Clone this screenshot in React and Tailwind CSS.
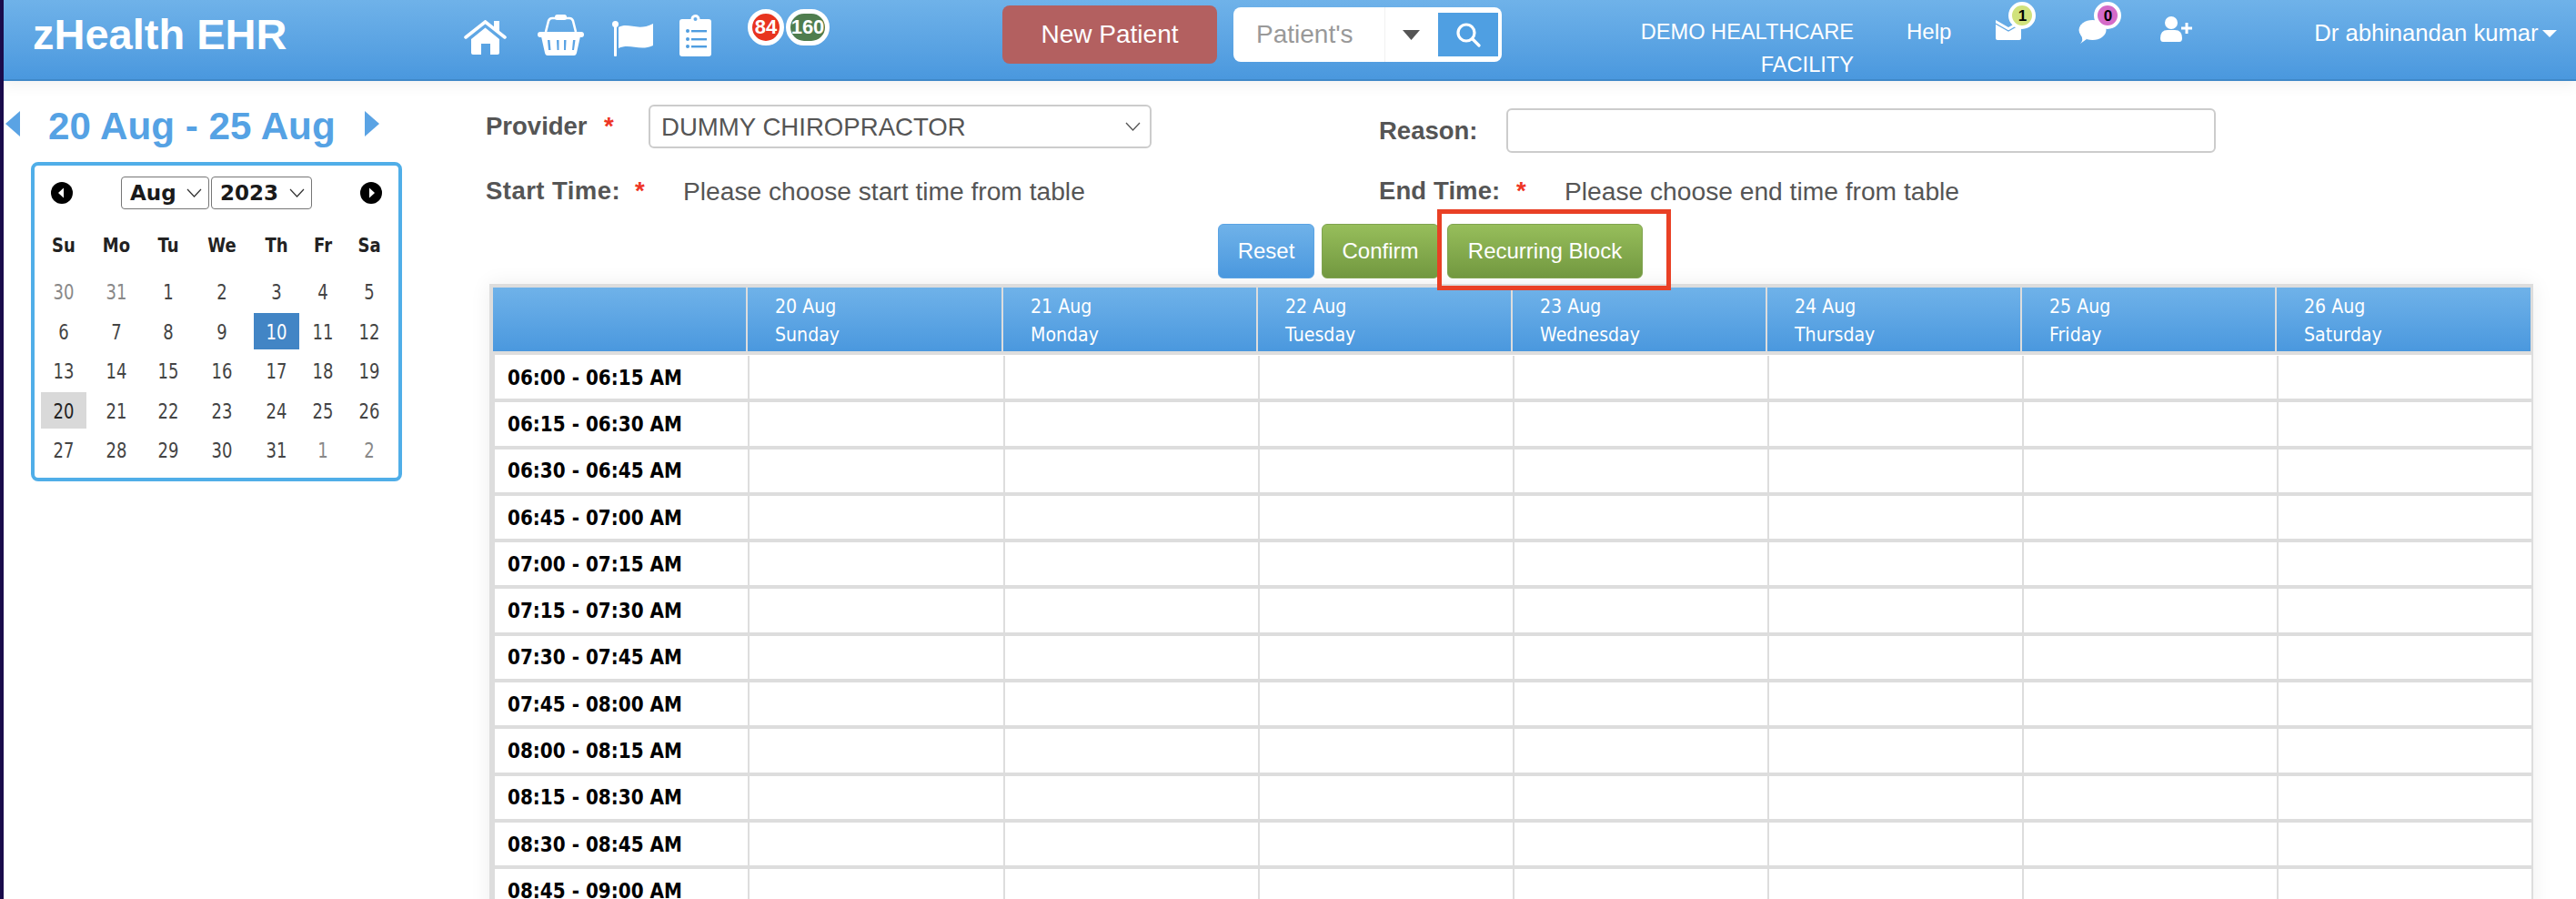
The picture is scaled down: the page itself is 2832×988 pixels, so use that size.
import React from 'react';

const SANS = { fontFamily: '"Liberation Sans", Arial, sans-serif' };
const DEJAVU = { fontFamily: '"DejaVu Sans", sans-serif' };
const BLUE = '#5aa3e4';

const DAYS = ['Su', 'Mo', 'Tu', 'We', 'Th', 'Fr', 'Sa'];
const WEEKS = [
  [[30, 1], [31, 1], 1, 2, 3, 4, 5],
  [6, 7, 8, 9, 10, 11, 12],
  [13, 14, 15, 16, 17, 18, 19],
  [20, 21, 22, 23, 24, 25, 26],
  [27, 28, 29, 30, 31, [1, 1], [2, 1]],
];
const COLS = [
  ['20 Aug', 'Sunday'], ['21 Aug', 'Monday'], ['22 Aug', 'Tuesday'], ['23 Aug', 'Wednesday'],
  ['24 Aug', 'Thursday'], ['25 Aug', 'Friday'], ['26 Aug', 'Saturday'],
];
const SLOTS = [
  '06:00 - 06:15 AM', '06:15 - 06:30 AM', '06:30 - 06:45 AM', '06:45 - 07:00 AM',
  '07:00 - 07:15 AM', '07:15 - 07:30 AM', '07:30 - 07:45 AM', '07:45 - 08:00 AM',
  '08:00 - 08:15 AM', '08:15 - 08:30 AM', '08:30 - 08:45 AM', '08:45 - 09:00 AM',
];

function HomeIcon() {
  return (
    <svg width="47" height="38" viewBox="0 0 47 38" fill="white" className="block">
      <path d="M33 1h6v11h-6z" />
      <path d="M2 19 23.5 2 45 19" fill="none" stroke="white" strokeWidth="3.6" strokeLinecap="round" />
      <path d="M8 21 23.5 8.5 39 21v15q0 2-2 2h-8V26H19v12h-9q-2 0-2-2z" />
    </svg>
  );
}

function BasketIcon() {
  return (
    <svg width="51" height="45" viewBox="0 0 51 45" fill="white" className="block">
      <path d="M9 19 12 7q1-3 4-3h19q3 0 4 3l3 12" fill="none" stroke="white" strokeWidth="2.6" />
      <rect x="19" y="0" width="13" height="6" rx="2.5" />
      <rect x="0" y="19" width="51" height="6" rx="3" />
      <path d="M4 24h43l-4 18q-.6 3-3 3H11q-2.400 0-3-3z" />
      <path d="M11 28h2.500l1 11H12zM21 28h2.500v11H21.500zM29 28h2.500l-.5 11h-2zM39 28h2.500l-1.500 11h-2z" fill="#5aa3e4" />
    </svg>
  );
}

function FlagIcon() {
  return (
    <svg width="45" height="39" viewBox="0 0 45 39" fill="white" className="block">
      <circle cx="3.500" cy="3.500" r="3.500" />
      <rect x="2" y="3" width="3" height="36" rx="1" />
      <path d="M7 7C18 1 28 12 45 3v24C30 34 20 24 7 30z" />
    </svg>
  );
}

function ClipboardIcon() {
  return (
    <svg width="35" height="46" viewBox="0 0 35 46" className="block">
      <rect x="0" y="5" width="35" height="41" rx="3" fill="white" />
      <circle cx="17.500" cy="5" r="5" fill="white" />
      <circle cx="17.500" cy="5" r="2" fill="#66abe7" />
      <g fill="#4f9de0">
        <circle cx="9" cy="18" r="2" /><circle cx="9" cy="27" r="2" /><circle cx="9" cy="35" r="2" />
        <rect x="13" y="17" width="17" height="2.400" /><rect x="13" y="26" width="17" height="2.400" /><rect x="13" y="34" width="17" height="2.400" />
      </g>
    </svg>
  );
}

function CountBadge({ bg, width, children }) {
  return (
    <div className="flex h-10 items-center justify-center rounded-full border-[5px] border-white text-[22px] leading-none font-bold text-white" style={{ background: bg, width }}>
      {children}
    </div>
  );
}

function TopBadge({ bg, children, className }) {
  return (
    <div className={`absolute flex size-[30px] items-center justify-center rounded-full border-[4px] border-white text-[17px] leading-none font-bold text-black ${className}`} style={{ background: bg }}>
      {children}
    </div>
  );
}

function Header() {
  return (
    <header className="relative z-10 flex h-[89px] shrink-0 items-start border-b-2 border-[#3f88c8] bg-gradient-to-b from-[#6fb2e9] to-[#4a98de] text-white shadow-[0_6px_14px_rgba(0,0,0,0.05)]">
      <div className="mt-[9px] ml-[32px] w-[474px] text-[47px] leading-[58px] font-bold">zHealth EHR</div>

      <div className="mt-[22px]"><HomeIcon /></div>
      <div className="mt-[16px] ml-[34px]"><BasketIcon /></div>
      <div className="mt-[23px] ml-[31px]"><FlagIcon /></div>
      <div className="mt-[16px] ml-[29px]"><ClipboardIcon /></div>
      <div className="mt-[10px] ml-[40px]"><CountBadge bg="#e8341f" width="40px">84</CountBadge></div>
      <div className="mt-[10px] ml-[2px]"><CountBadge bg="#4f7d4e" width="48px">160</CountBadge></div>

      <div className="mt-[6px] ml-[190px] flex h-16 w-[236px] items-center justify-center rounded-lg bg-[#b36060] text-[28px]">New Patient</div>

      <div className="mt-[8px] ml-[18px] flex h-[60px] w-[295px] rounded-lg bg-white">
        <div className="flex w-[167px] items-center border-r border-[#f1f1f1] pl-[25px] text-[28px] text-[#999]">Patient's</div>
        <div className="flex w-[58px] items-center justify-center">
          <svg width="19" height="11" viewBox="0 0 19 11" className="ml-[-1px]"><path d="M0 0h19l-9.500 11z" fill="#555" /></svg>
        </div>
        <div className="mt-[6px] flex h-12 w-[66px] items-center justify-center bg-[#4f9fe2]">
          <svg width="28" height="28" viewBox="0 0 28 28" fill="none" stroke="white" strokeWidth="3.200">
            <circle cx="12" cy="12" r="9" />
            <path d="m19 19 7 7" strokeLinecap="round" />
          </svg>
        </div>
      </div>

      <div className="mt-[17px] ml-[154px] w-[233px] text-right text-[23.600px] leading-[36px] whitespace-nowrap">
        <div className="flex justify-end">DEMO HEALTHCARE</div>
        <div>FACILITY</div>
      </div>
      <div className="mt-[17px] ml-[58px] text-[24px] leading-[36px]">Help</div>

      <div className="relative mt-[22px] ml-[49px] h-[24px] w-[28px]">
        <svg width="28" height="22" viewBox="0 0 28 22" className="block">
          <path d="M0 0l14 8 14-8v20q0 2-2 2H2q-2 0-2-2z" fill="white" />
          <path d="M0 4l14 8 14-8" fill="none" stroke="#62a8e5" strokeWidth="1.300" />
        </svg>
        <TopBadge bg="#d1e27c" className="top-[-20px] left-[14px]">1</TopBadge>
      </div>

      <div className="relative mt-[22px] ml-[63px] h-[26px] w-[31px]">
        <svg width="31" height="26" viewBox="0 0 31 26" className="block">
          <ellipse cx="15.500" cy="11" rx="15" ry="11" fill="white" />
          <path d="M6 17 9 21 2 26q4-4 1-9z" fill="white" />
        </svg>
        <TopBadge bg="#d46bc8" className="top-[-20px] left-[17px]">0</TopBadge>
      </div>

      <div className="mt-[18px] ml-[59px]">
        <svg width="36" height="28" viewBox="0 0 36 28" className="block">
          <circle cx="12" cy="7" r="7" fill="white" />
          <path d="M0 24q0-9 8-9h8q8 0 8 9 0 4-3 4H3q-3 0-3-4z" fill="white" />
          <path d="M29 7v12M23 13h12" stroke="white" strokeWidth="3" fill="none" />
        </svg>
      </div>

      <div className="mt-[17px] ml-[133px] text-[25.600px] leading-[38px] whitespace-nowrap">Dr abhinandan kumar</div>
      <svg width="16" height="8" viewBox="0 0 16 8" className="mt-[33px] ml-[4px]"><path d="M0 0h16L8 8z" fill="white" /></svg>
    </header>
  );
}

function SmallSelect({ label, width }) {
  return (
    <div className="flex h-9 items-center justify-between rounded-[4px] border border-[#767676] pr-[7px] pl-[9px] text-[23px] font-bold text-[#1a1a1a]" style={{ width, ...DEJAVU }}>
      {label}
      <svg width="17" height="10" viewBox="0 0 17 10" fill="none" stroke="#333" strokeWidth="1.200"><path d="m1 1 7.500 8L16 1" /></svg>
    </div>
  );
}

function NavCircle({ flip }) {
  return (
    <svg width="24" height="24" viewBox="0 0 24 24" className="block shrink-0">
      <circle cx="12" cy="12" r="12" fill="#000" />
      <path d={flip ? 'M10 6.500 16 12l-6 5.500z' : 'M14 6.500 8 12l6 5.500z'} fill="white" />
    </svg>
  );
}

function Calendar() {
  return (
    <div className="mt-[15px] ml-[30px] h-[351px] w-[408px] rounded-lg border-4 border-[#50aee8] bg-white" style={DEJAVU}>
      <div className="mt-[12px] flex h-9 items-center">
        <div className="ml-[18px]"><NavCircle /></div>
        <div className="ml-[53px]"><SmallSelect label="Aug" width="97px" /></div>
        <div className="ml-[2px]"><SmallSelect label="2023" width="111px" /></div>
        <div className="ml-[53px]"><NavCircle flip /></div>
      </div>
      <div className="mt-[19px] ml-[7px] grid grid-cols-[50px_66px_48px_70px_50px_52px_50px]">
        {DAYS.map((d) => (
          <div key={d} className="flex h-10 items-center justify-center text-[18px] font-bold text-[#222]">
            <span className="inline-block scale-y-[1.2]">{d}</span>
          </div>
        ))}
      </div>
      <div className="mt-[10px] ml-[7px] grid grid-cols-[50px_66px_48px_70px_50px_52px_50px]">
        {WEEKS.flat().map((v, i) => {
          const muted = Array.isArray(v);
          const n = muted ? v[0] : v;
          let tone = muted ? 'text-[#888]' : 'text-[#444]';
          if (n === 10 && !muted) tone = 'bg-[#4285c5] text-white';
          if (n === 20) tone = 'bg-[#d9d9d9] text-[#222]';
          return (
            <div key={i} className="flex h-[43.500px] items-center justify-center">
              <div className={`flex h-10 w-[50px] items-center justify-center text-[18px] ${tone}`}>
                <span className="inline-block scale-y-[1.25]">{n}</span>
              </div>
            </div>
          );
        })}
      </div>
    </div>
  );
}

function Sidebar() {
  return (
    <aside className="w-[530px] shrink-0">
      <div className="mt-[26px] flex h-12 items-start">
        <svg width="16" height="28" viewBox="0 0 16 28" className="mt-[7px] ml-[2px] shrink-0"><path d="M16 0v28L0 14z" fill={BLUE} /></svg>
        <div className="ml-[31px] w-[315px] text-[42.200px] leading-[48px] font-bold whitespace-nowrap text-[#55a2e4]">20 Aug - 25 Aug</div>
        <svg width="16" height="28" viewBox="0 0 16 28" className="mt-[7px] ml-[33px] shrink-0"><path d="M0 0v28l16-14z" fill={BLUE} /></svg>
      </div>
      <Calendar />
    </aside>
  );
}

function Star({ className }) {
  return <span className={`font-bold text-[#ee3524] ${className}`}>*</span>;
}

function GridRow({ slot }) {
  return (
    <div className="grid h-[51.300px] grid-cols-[278px_281px_280px_280px_280px_280px_280px_280px] border-b-4 border-[#ddd]">
      <div className="flex items-center pl-[14px] text-[20px] font-bold text-black" style={DEJAVU}>
        <span className="inline-block scale-y-[1.12] whitespace-nowrap">{slot}</span>
      </div>
      {COLS.map((c) => (
        <div key={c[0]} className="border-l-2 border-[#ddd]" />
      ))}
    </div>
  );
}

function Schedule() {
  return (
    <div className="mt-[6px] ml-[4px] w-[2247px] bg-white shadow-[0_0_22px_rgba(0,0,0,0.07)]">
      <div className="grid grid-cols-[278px_281px_280px_280px_280px_280px_280px_281px] border-t-4 border-r-[3px] border-b-4 border-l-4 border-[#ddd] bg-gradient-to-b from-[#6fb2e9] to-[#4a98de] text-[19px] leading-[31px] text-white" style={DEJAVU}>
        <div className="h-[70px]" />
        {COLS.map((c) => (
          <div key={c[0]} className="h-[70px] border-l-2 border-[#ddd] pt-[5px] pl-[30px]">
            <div className="scale-y-[1.15] origin-left">{c[0]}</div>
            <div className="scale-y-[1.15] origin-left">{c[1]}</div>
          </div>
        ))}
      </div>
      <div className="border-r-2 border-l-[6px] border-[#ddd] pt-[1px]">
        {SLOTS.map((s) => <GridRow key={s} slot={s} />)}
      </div>
    </div>
  );
}

function Form() {
  return (
    <section className="flex-1 text-[#555]">
      <div className="mt-[26px] grid grid-cols-[982px_1fr]">
        <div className="flex h-[48px] items-center text-[27.500px]">
          <span className="w-[130px] font-bold">Provider</span>
          <Star className="w-[49px]" />
          <div className="flex h-[48px] w-[553px] items-center justify-between rounded-md border-2 border-[#ccc] pr-[10px] pl-[12px] text-[27.600px]">
            <span className="mt-[2px]">DUMMY CHIROPRACTOR</span>
            <svg width="17" height="10" viewBox="0 0 17 10" fill="none" stroke="#555" strokeWidth="1.300"><path d="m1 1 7.500 8L16 1" /></svg>
          </div>
        </div>
        <div className="mt-[4px] flex h-[49px] items-center text-[27.500px]">
          <span className="w-[140px] font-bold">Reason:</span>
          <input className="h-[49px] w-[780px] rounded-md border-2 border-[#ccc] bg-white outline-none" />
        </div>
      </div>
      <div className="mt-[22px] grid h-10 grid-cols-[982px_1fr] text-[27.500px] leading-10">
        <div className="flex">
          <span className="w-[164px] font-bold tracking-[0.450px] whitespace-nowrap">Start Time:</span>
          <Star className="w-[53px]" />
          <span className="text-[28.200px] whitespace-nowrap">Please choose start time from table</span>
        </div>
        <div className="flex">
          <span className="w-[151px] font-bold tracking-[0.100px] whitespace-nowrap">End Time:</span>
          <Star className="w-[53px]" />
          <span className="text-[28.200px] whitespace-nowrap">Please choose end time from table</span>
        </div>
      </div>
      <div className="mt-[16px] ml-[805px] flex h-[60px] gap-2 text-[24px] text-white">
        <button className="w-[106px] rounded-md border border-[#5aa3e4] bg-gradient-to-b from-[#6fb2e9] to-[#4a98de]">Reset</button>
        <button className="w-[129px] rounded-md border border-[#7fa34f] bg-gradient-to-b from-[#97be5b] to-[#729840]">Confirm</button>
        <div className="relative ml-[1px]">
          <button className="h-full w-[215px] rounded-md border border-[#7fa34f] bg-gradient-to-b from-[#97be5b] to-[#729840]">Recurring Block</button>
          <div className="pointer-events-none absolute top-[-16px] left-[-11px] z-10 h-[89px] w-[257px] border-[5px] border-[#e94025]" />
        </div>
      </div>
      <Schedule />
    </section>
  );
}

export default function App() {
  return (
    <div className="h-[988px] w-[2832px] overflow-hidden border-l-4 border-[#1a0b4b] bg-white" style={SANS}>
      <Header />
      <div className="flex">
        <Sidebar />
        <Form />
      </div>
    </div>
  );
}
